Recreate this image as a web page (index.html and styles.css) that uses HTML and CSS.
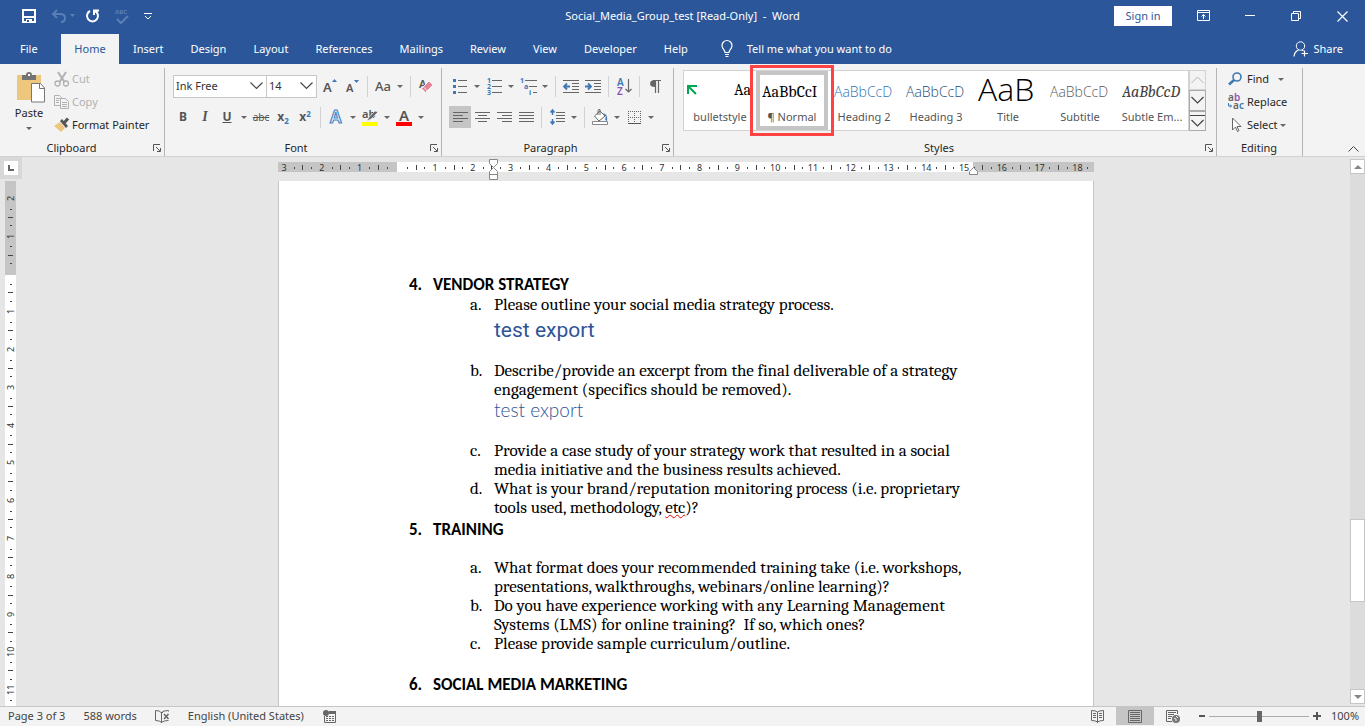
FILE: index.html
```
<!DOCTYPE html>
<html lang="en">
<head>
<meta charset="UTF-8">
<meta name="viewport" content="width=device-width, initial-scale=1.0">
<title>Social_Media_Group_test [Read-Only] - Word</title>
<link rel="stylesheet" href="styles.css">
</head>
<body>

<header class="titlebar">
	<div class="quick">
		<button aria-label="Save"><svg width="14" height="14" viewBox="0 0 14 14"><path d="M1 1h12v12H1z" fill="none" stroke="#fff" stroke-width="2"/><path d="M1 7h12v2H1zM4 10h6v4H4z" fill="#fff"/><path d="M5 11h2v2H5z" fill="#2b579a"/></svg></button>
		<button class="off" aria-label="Undo"><svg width="24" height="14" viewBox="0 0 24 14"><path d="M6 1L2 5l4 4M2 5h7q5 0 5 4t-4 4" fill="none" stroke="#5a7eb6" stroke-width="2"/><path d="M19 5h5l-2.500 3z" fill="#5a7eb6"/></svg></button>
		<button class="repeat" aria-label="Repeat"><svg width="14" height="14" viewBox="0 0 14 14"><path d="M9 2a5.500 5.500 0 1 1-5 0M8 6V1.500h5" fill="none" stroke="#fff" stroke-width="2"/></svg></button>
		<button class="off" aria-label="Spelling"><svg width="14" height="16" viewBox="0 0 14 16"><text x="0" y="6" font-size="6" font-weight="700" fill="#5a7eb6">ABC</text><path d="M2 11l4 4 7-7" fill="none" stroke="#5a7eb6" stroke-width="2"/></svg></button>
		<button aria-label="Customize"><svg width="8" height="8" viewBox="0 0 8 8"><path d="M0 1.500h8M1 4l3 3 3-3" fill="none" stroke="#fff"/></svg></button>
	</div>
	<div class="doc-name">Social_Media_Group_test [Read-Only]&nbsp; -&nbsp; Word</div>
	<div class="window-tools">
		<button class="signin">Sign in</button>
		<button aria-label="Ribbon display options"><svg width="14" height="12" viewBox="0 0 14 12"><path d="M.5.5h12v10H.5zM.5 2.500h12M6.500 9V4.500M4.500 6.500l2-2 2 2" fill="none" stroke="#fff"/></svg></button>
		<button aria-label="Minimize"><svg width="10" height="10" viewBox="0 0 10 10"><path d="M0 4.500h10" stroke="#fff"/></svg></button>
		<button aria-label="Restore"><svg width="10" height="10" viewBox="0 0 10 10"><path d="M.5 2.500h7v7h-7zM2.500 2.500v-2h7v7h-2" fill="none" stroke="#fff"/></svg></button>
		<button aria-label="Close"><svg width="11" height="11" viewBox="0 0 11 11"><path d="M.5.5l10 10M10.500.5l-10 10" stroke="#fff" stroke-width="1.200"/></svg></button>
	</div>
</header>

<nav class="tabs">
	<a href="#" class="file">File</a>
	<a href="#" class="active">Home</a>
	<a href="#">Insert</a>
	<a href="#">Design</a>
	<a href="#">Layout</a>
	<a href="#">References</a>
	<a href="#">Mailings</a>
	<a href="#">Review</a>
	<a href="#">View</a>
	<a href="#">Developer</a>
	<a href="#">Help</a>
	<a href="#" class="tell"><svg width="12" height="18" viewBox="0 0 12 18"><path d="M4 12.500c0-3-3-3.500-3-7a5 5 0 0 1 10 0c0 3.500-3 4-3 7zM4 14.500h4M4.500 16.500h3" fill="none" stroke="#fff" stroke-width="1.200"/></svg>Tell me what you want to do</a>
	<a href="#" class="share"><svg width="16" height="16" viewBox="0 0 16 16"><circle cx="7.500" cy="5" r="4.200" fill="none" stroke="#fff"/><path d="M1 15.500q.5-5 4.500-6.500M9 9l1.500 1M11.500 9.500v6M8.500 12.500h6.500" fill="none" stroke="#fff" stroke-width="1.200"/></svg>Share</a>
</nav>

<section class="ribbon">
	<div class="group clipboard">
		<div class="group-body">
			<button class="paste">
				<svg width="28" height="31" viewBox="0 0 28 31"><path d="M0 3h24v25H0z" fill="#eec77f"/><path d="M5 3h4q0-3 3-3t3 3h4v5H5z" fill="#737373"/><path d="M11 2h2v2h-2z" fill="#fff"/><path d="M14.500 11.500h9l4 4.500v14h-13z" fill="#fff" stroke="#777"/><path d="M22.500 11.500v5h5" fill="none" stroke="#777"/></svg>
				<span>Paste</span>
				<i class="caret"></i>
			</button>
			<div class="stack">
				<button class="off"><svg width="16" height="16" viewBox="0 0 16 16"><path d="M4 1l6.500 10M12 1L5.500 11" stroke="#b1b1b1" stroke-width="2"/><circle cx="3.500" cy="12.500" r="2.500" fill="none" stroke="#b1b1b1" stroke-width="1.300"/><circle cx="12" cy="12.500" r="2.500" fill="none" stroke="#b1b1b1" stroke-width="1.300"/></svg>Cut</button>
				<button class="off"><svg width="16" height="16" viewBox="0 0 16 16"><path d="M.5 1.500h5l2 2v8h-7zM2 4.500h4M2 6.500h3M2 8.500h3" fill="none" stroke="#b1b1b1"/><path d="M6.500 4.500h5l3 3v7h-8z" fill="#f3f3f3" stroke="#b1b1b1"/><path d="M8 8.500h5M8 10.500h5M8 12.500h5" stroke="#b1b1b1"/></svg>Copy</button>
				<button><svg width="16" height="16" viewBox="0 0 16 16"><path d="M0 9l6-4 5 6-4 4z" fill="#eec77f"/><path d="M6 4l2-2 6 7-2 2z" fill="#555"/><path d="M10 6l4-4.500" stroke="#555" stroke-width="3"/></svg>Format Painter</button>
			</div>
		</div>
		<div class="group-name"><span>Clipboard</span><button class="launch" aria-label="Clipboard settings"><svg width="8" height="8" viewBox="0 0 8 8"><path d="M.5 7V.5H7M3 3l4 4M7.500 4v3.500H4" fill="none" stroke="#555"/></svg></button></div>
	</div>

	<div class="group font">
		<div class="group-body rows">
			<div class="row">
				<label class="combo name"><select aria-label="Font"><option>Ink Free</option></select><svg width="13" height="8" viewBox="0 0 13 8"><path d="M.5.5l6 6 6-6" fill="none" stroke="#444" stroke-width="1.200"/></svg></label>
				<label class="combo size"><select aria-label="Font size"><option>14</option></select><svg width="13" height="8" viewBox="0 0 13 8"><path d="M.5.5l6 6 6-6" fill="none" stroke="#444" stroke-width="1.200"/></svg></label>
				<button class="ib grow" aria-label="Grow font"><svg width="16" height="16" viewBox="0 0 16 16"><text x="1" y="14" font-size="13" font-weight="600" fill="#555">A</text><path d="M10 4h5l-2.500-3z" fill="#3e78b5"/></svg></button>
				<button class="ib" aria-label="Shrink font"><svg width="16" height="16" viewBox="0 0 16 16"><text x="2" y="14" font-size="11" font-weight="600" fill="#555">A</text><path d="M10 2h5l-2.500 3z" fill="#3e78b5"/></svg></button>
				<i class="sep"></i>
				<button class="ib aa">Aa</button><button class="car" aria-label="Case options"><i class="caret"></i></button>
				<i class="sep"></i>
				<button class="ib" aria-label="Clear formatting"><svg width="16" height="16" viewBox="0 0 16 16"><text x="1" y="10" font-size="11" font-weight="600" fill="#555">A</text><path d="M3.500 10.500L11 3l4 4-7.500 7.500z" fill="#e8849a" stroke="#f3f3f3"/><path d="M5 8.500l4.500 4.500" stroke="#f3f3f3"/></svg></button>
			</div>
			<div class="row">
				<button class="ib b">B</button>
				<button class="ib it">I</button>
				<button class="ib u">U</button><button class="car" aria-label="Underline options"><i class="caret"></i></button>
				<button class="ib strike">abc</button>
				<button class="ib b">x<sub>2</sub></button>
				<button class="ib b">x<sup>2</sup></button>
				<i class="sep"></i>
				<button class="ib" aria-label="Text effects"><svg width="16" height="16" viewBox="0 0 16 16"><text x="2" y="14" font-size="17" font-weight="600" fill="#fff" stroke="#4a86c5" stroke-width="1.200">A</text></svg></button><button class="car" aria-label="Effect options"><i class="caret"></i></button>
				<button class="ib" aria-label="Highlight"><svg width="18" height="17" viewBox="0 0 18 17"><text x="1" y="9" font-size="11" font-weight="600" fill="#555">ab</text><path d="M6 12l2-4 6-6 3 1-7 7z" fill="#666" stroke="#f3f3f3" stroke-width=".6"/><path d="M1 13h16v4H1z" fill="#ff0"/></svg></button><button class="car" aria-label="Highlight colors"><i class="caret"></i></button>
				<button class="ib" aria-label="Font color"><svg width="16" height="17" viewBox="0 0 16 17"><text x="3" y="12" font-size="15" font-weight="600" fill="#555">A</text><path d="M0 13h16v4H0z" fill="#f00"/></svg></button><button class="car" aria-label="Font colors"><i class="caret"></i></button>
			</div>
		</div>
		<div class="group-name"><span>Font</span><button class="launch" aria-label="Font settings"><svg width="8" height="8" viewBox="0 0 8 8"><path d="M.5 7V.5H7M3 3l4 4M7.500 4v3.500H4" fill="none" stroke="#555"/></svg></button></div>
	</div>

	<div class="group paragraph">
		<div class="group-body rows">
			<div class="row">
				<button class="ib" aria-label="Bullets"><svg width="14" height="16" viewBox="0 0 14 16"><path d="M5 2.500h9M5 8.500h9M5 14.500h9" stroke="#666"/><path d="M0 1h3v3H0zM0 7h3v3H0zM0 13h3v3H0z" fill="#3e78b5"/></svg></button><button class="car" aria-label="Bullet styles"><i class="caret"></i></button>
				<button class="ib" aria-label="Numbering"><svg width="15" height="18" viewBox="0 0 15 18"><path d="M5 3.500h10M5 9.500h10M5 15.500h10" stroke="#666"/><g font-size="7" font-weight="700" fill="#3e78b5"><text x="0" y="6">1</text><text x="0" y="12">2</text><text x="0" y="18">3</text></g></svg></button><button class="car" aria-label="Number formats"><i class="caret"></i></button>
				<button class="ib" aria-label="Multilevel list"><svg width="17" height="18" viewBox="0 0 17 18"><path d="M5 3.500h12M9 9.500h8M13 15.500h4" stroke="#666"/><g font-size="7" font-weight="700" fill="#3e78b5"><text x="0" y="6">1</text><text x="4" y="12">a</text><text x="9" y="18">i</text></g></svg></button><button class="car" aria-label="List levels"><i class="caret"></i></button>
				<i class="sep"></i>
				<button class="ib" aria-label="Decrease indent"><svg width="16" height="13" viewBox="0 0 16 13"><path d="M0 .5h16M9 3.500h7M9 6.500h7M9 9.500h7M0 12.500h16" stroke="#666"/><path d="M7 6.500H1M4 3.500l-3 3 3 3" fill="none" stroke="#3e78b5" stroke-width="1.800"/></svg></button>
				<button class="ib" aria-label="Increase indent"><svg width="16" height="13" viewBox="0 0 16 13"><path d="M0 .5h16M9 3.500h7M9 6.500h7M9 9.500h7M0 12.500h16" stroke="#666"/><path d="M0 6.500h6M3 3.500l3 3-3 3" fill="none" stroke="#3e78b5" stroke-width="1.800"/></svg></button>
				<i class="sep"></i>
				<button class="ib" aria-label="Sort"><svg width="14" height="17" viewBox="0 0 14 17"><g font-size="10" font-weight="600"><text x="0" y="8" fill="#3e78b5">A</text><text x="0" y="17" fill="#8a55b0">Z</text></g><path d="M11.500 1v13M8.500 11l3 3 3-3" fill="none" stroke="#666" stroke-width="1.200"/></svg></button>
				<i class="sep"></i>
				<button class="ib" aria-label="Show marks"><svg width="11" height="13" viewBox="0 0 11 13"><path d="M5 7Q0 7 0 3.500T5 0z" fill="#666"/><path d="M3 .5h8M5.500 0v13M8.500 0v13" stroke="#666" stroke-width="1.200"/></svg></button>
			</div>
			<div class="row">
				<button class="ib on" aria-label="Align left"><svg width="15" height="11" viewBox="0 0 15 11"><path d="M0 .5h15M0 3.500h10M0 6.500h15M0 9.500h10" stroke="#666"/></svg></button>
				<button class="ib" aria-label="Center"><svg width="15" height="11" viewBox="0 0 15 11"><path d="M0 .5h15M3 3.500h9M0 6.500h15M3 9.500h9" stroke="#666"/></svg></button>
				<button class="ib" aria-label="Align right"><svg width="15" height="11" viewBox="0 0 15 11"><path d="M0 .5h15M5 3.500h10M0 6.500h15M5 9.500h10" stroke="#666"/></svg></button>
				<button class="ib" aria-label="Justify"><svg width="15" height="11" viewBox="0 0 15 11"><path d="M0 .5h15M0 3.500h15M0 6.500h15M0 9.500h15" stroke="#666"/></svg></button>
				<i class="sep"></i>
				<button class="ib" aria-label="Line spacing"><svg width="15" height="16" viewBox="0 0 15 16"><path d="M6 3.500h9M6 6.500h9M6 9.500h9M6 12.500h9" stroke="#666"/><path d="M2.500 1v5M.5 3.500l2-2.500 2 2.500M2.500 15v-5M.5 12.500l2 2.500 2-2.500" fill="none" stroke="#3e78b5" stroke-width="1.500"/></svg></button><button class="car" aria-label="Spacing options"><i class="caret"></i></button>
				<i class="sep"></i>
				<button class="ib" aria-label="Shading"><svg width="17" height="16" viewBox="0 0 17 16"><path d="M2.500 7L8 2l5 5-6 5zM6 6V2q0-2 2-1.500V6" fill="#fff" stroke="#666"/><path d="M11 4q5 1 4 8-3-1-1-4z" fill="#3e78b5"/><path d="M.5 12.500h15v3H.5z" fill="#fff" stroke="#888"/></svg></button><button class="car" aria-label="Shading colors"><i class="caret"></i></button>
				<button class="ib" aria-label="Borders"><svg width="13" height="13" viewBox="0 0 13 13"><path d="M0 .5h13M.5 0v12M6.500 0v12M12.500 0v12M0 6.500h13" stroke="#666" stroke-dasharray="1 1"/><path d="M0 12.500h13" stroke="#555"/></svg></button><button class="car" aria-label="Border options"><i class="caret"></i></button>
			</div>
		</div>
		<div class="group-name"><span>Paragraph</span><button class="launch" aria-label="Paragraph settings"><svg width="8" height="8" viewBox="0 0 8 8"><path d="M.5 7V.5H7M3 3l4 4M7.500 4v3.500H4" fill="none" stroke="#555"/></svg></button></div>
	</div>

	<div class="group styles">
		<div class="group-body">
			<div class="gallery">
				<button class="style bullet"><span class="sample"><svg width="10" height="10" viewBox="0 0 10 10"><path d="M1 9V1h9M1.500 1.500L9 9" fill="none" stroke="#00a651" stroke-width="2"/></svg><b>Aa</b></span><span>bulletstyle</span></button>
				<button class="style normal"><span class="sample">AaBbCcI</span><span>¶ Normal</span></button>
				<button class="style h2"><span class="sample">AaBbCcD</span><span>Heading 2</span></button>
				<button class="style h3"><span class="sample">AaBbCcD</span><span>Heading 3</span></button>
				<button class="style title"><span class="sample">AaB</span><span>Title</span></button>
				<button class="style subtitle"><span class="sample">AaBbCcD</span><span>Subtitle</span></button>
				<button class="style subtle"><span class="sample">AaBbCcD</span><span>Subtle Em...</span></button>
			</div>
			<div class="gallery-nav">
				<button class="off" aria-label="Previous styles"><svg width="13" height="8" viewBox="0 0 13 8"><path d="M.5 7l6-6 6 6" fill="none" stroke="#b5b5b5"/></svg></button>
				<button aria-label="Next styles"><svg width="13" height="8" viewBox="0 0 13 8"><path d="M.5 1l6 6 6-6" fill="none" stroke="#444" stroke-width="1.200"/></svg></button>
				<button aria-label="More styles"><svg width="15" height="14" viewBox="0 0 15 14"><path d="M0 1.500h15M1.500 6l6 6 6-6" fill="none" stroke="#444" stroke-width="1.200"/></svg></button>
			</div>
		</div>
		<div class="group-name"><span>Styles</span><button class="launch" aria-label="Styles pane"><svg width="8" height="8" viewBox="0 0 8 8"><path d="M.5 7V.5H7M3 3l4 4M7.500 4v3.500H4" fill="none" stroke="#555"/></svg></button></div>
	</div>

	<div class="group editing">
		<div class="group-body stack">
			<button><svg width="16" height="14" viewBox="0 0 16 14"><circle cx="9" cy="5" r="4" fill="none" stroke="#3e78b5" stroke-width="1.600"/><path d="M6 8l-5 4.500" stroke="#3e78b5" stroke-width="2.500"/></svg>Find<i class="caret far"></i></button>
			<button><svg width="16" height="16" viewBox="0 0 16 16"><g font-size="10" font-weight="600"><text x="0" y="7" fill="#666">a</text><text x="6" y="7" fill="#8a55b0">b</text><text x="5" y="15" fill="#666">a</text><text x="11" y="15" fill="#3e78b5">c</text></g><path d="M.5 9v3h3M2 10.500L3.500 12 2 13.500" fill="none" stroke="#3e78b5"/></svg>Replace</button>
			<button><svg width="16" height="16" viewBox="0 0 16 16"><path d="M4.500 1v12l3-3 2 4.500 1.500-.8-2-4.200h4z" fill="#fff" stroke="#666"/></svg>Select<i class="caret"></i></button>
		</div>
		<div class="group-name"><span>Editing</span></div>
	</div>
	<button class="collapse" aria-label="Collapse the ribbon"><svg width="11" height="6" viewBox="0 0 11 6"><path d="M.5 5.500l5-5 5 5" fill="none" stroke="#444"/></svg></button>
</section>

<main class="workspace">
	<div class="left-edge">
		<button class="tabstop" aria-label="Tab stop"><svg width="6" height="6" viewBox="0 0 6 6"><path d="M1 0v5h5" fill="none" stroke="#666" stroke-width="2"/></svg></button>
		<div class="vruler" id="vruler"></div>
	</div>
	<div class="canvas">
		<div class="hruler" id="hruler">
			<svg class="mark indent" width="9" height="22" viewBox="0 0 9 22"><path d="M.5.5h8v4l-4 4 4 4v8h-8v-8l4-4-4-4z" fill="#fff" stroke="#888"/><path d="M.5 15.500h8" stroke="#888"/></svg>
			<svg class="mark right" width="9" height="8" viewBox="0 0 9 8"><path d="M.5 7.500v-3l4-4 4 4v3z" fill="#fff" stroke="#888"/></svg>
		</div>
		<article class="page">
			<h2><span>4.</span>VENDOR STRATEGY</h2>
			<ol>
				<li><span>a.</span><p>Please outline your social media strategy process.</p>
					<p class="answer big">test export</p></li>
				<li><span>b.</span><p>Describe/provide an excerpt from the final deliverable of a strategy<br>engagement (specifics should be removed).</p>
					<p class="answer ink">test export</p></li>
				<li><span>c.</span><p>Provide a case study of your strategy work that resulted in a social<br>media initiative and the business results achieved.</p></li>
				<li><span>d.</span><p>What is your brand/reputation monitoring process (i.e. proprietary<br>tools used, methodology, <u>etc</u>)?</p></li>
			</ol>
			<h2><span>5.</span>TRAINING</h2>
			<ol class="spaced">
				<li><span>a.</span><p>What format does your recommended training take (i.e. workshops,<br>presentations, walkthroughs, webinars/online learning)?</p></li>
				<li><span>b.</span><p>Do you have experience working with any Learning Management<br>Systems (LMS) for online training?&nbsp; If so, which ones?</p></li>
				<li><span>c.</span><p>Please provide sample curriculum/outline.</p></li>
			</ol>
			<h2><span>6.</span>SOCIAL MEDIA MARKETING</h2>
		</article>
	</div>
	<div class="scrollbar">
		<button aria-label="Scroll up"><i class="caret up"></i></button>
		<div class="track"><div class="thumb"></div></div>
		<button aria-label="Scroll down"><i class="caret down"></i></button>
	</div>
</main>

<footer class="status">
	<span class="pages">Page 3 of 3</span>
	<span class="words">588 words</span>
	<button class="proof" aria-label="Proofing errors"><svg width="15" height="13" viewBox="0 0 15 13"><path d="M8 2.500H6q-1-2-5.500-2v10q4.500 0 6 2V2.500M6.500 2.500Q8 .5 13.500.5v1M6.500 12.500q2-2 7-2" fill="none" stroke="#666"/><path d="M9 4l4.500 5M13.500 4L9 9" stroke="#666" stroke-width="1.500"/></svg></button>
	<span class="lang">English (United States)</span>
	<button class="macro" aria-label="Record macro"><svg width="13" height="13" viewBox="0 0 13 13"><path d="M1.500 6v6.500h11V4" fill="none" stroke="#666"/><path d="M6 1h7v3H6z" fill="#666"/><circle cx="3" cy="3" r="3" fill="#666"/><path d="M3 6.500h8M3 8.500h8M3 10.500h8" stroke="#666" stroke-dasharray="2 1"/></svg></button>
	<div class="views">
		<button aria-label="Read mode"><svg width="13" height="13" viewBox="0 0 13 13"><path d="M.5.5q4 0 6 1.500 2-1.500 6-1.500v10q-4 0-6 1.500-2-1.500-6-1.500zM6.500 2v11M2 3.500h3M2 5.500h3M2 7.500h3M8 3.500h3M8 5.500h3M8 7.500h3" fill="none" stroke="#666"/></svg></button>
		<button class="on" aria-label="Print layout"><svg width="14" height="13" viewBox="0 0 14 13"><path d="M.5.5h13v12H.5zM2 2.500h10M2 4.500h10M2 6.500h10M2 8.500h10M2 10.500h10" fill="none" stroke="#666"/></svg></button>
		<button aria-label="Web layout"><svg width="14" height="13" viewBox="0 0 14 13"><path d="M11.500 4V.5H.5v11H6M2 2.500h8M2 4.500h6M2 6.500h4M2 8.500h3" fill="none" stroke="#666"/><circle cx="10" cy="9" r="4" fill="#777"/><path d="M8 8l2 1v2M10 6l2 2" stroke="#f3f3f3" fill="none"/></svg></button>
	</div>
	<div class="zoom">
		<button aria-label="Zoom out"><svg width="6" height="8" viewBox="0 0 6 8"><path d="M0 4h6" stroke="#555" stroke-width="2"/></svg></button>
		<input type="range" min="0" max="100" value="50" aria-label="Zoom">
		<button aria-label="Zoom in"><svg width="8" height="8" viewBox="0 0 8 8"><path d="M0 4h8M4 0v8" stroke="#555" stroke-width="2"/></svg></button>
		<span>100%</span>
	</div>
</footer>

<script src="ruler.js"></script>
</body>
</html>
```
FILE: styles.css
```
*{
	box-sizing: border-box;
	margin: 0;
	padding: 0;
}
html,body{
	height: 100%;
}
body{
	display: flex;
	flex-direction: column;
	overflow: hidden;
	font: 11px/16px "Segoe UI", "Noto Sans", "Open Sans", sans-serif;
	color: #262626;
	background: #e6e6e6;
}
button{
	border: 0;
	background: none;
	font: inherit;
	color: inherit;
	display: flex;
	align-items: center;
	justify-content: center;
	white-space: nowrap;
}
a{
	color: inherit;
	text-decoration: none;
}
svg{
	display: block;
	flex: none;
	overflow: visible;
}
i{
	font-style: normal;
}
.caret{
	border: 3px solid transparent;
	border-top-color: #666;
	border-bottom: 0;
}
.caret.up, .caret.down{
	border-width: 4px;
	border-top-color: #888;
	border-bottom: 0;
}
.caret.up{
	border-top: 0;
	border-bottom: 4px solid #888;
}
.off{
	color: #b1b1b1;
}

/* title bar */
.titlebar{
	display: grid;
	grid-template-columns: 1fr auto 1fr;
	align-items: center;
	height: 32px;
	flex: none;
	background: #2b579a;
	color: #fff;
}
.quick{
	display: flex;
	align-items: center;
	gap: 15px;
	padding-left: 22px;
}
.quick .repeat{
	margin-left: -4px;
}
.window-tools{
	display: flex;
	justify-content: flex-end;
}
.window-tools button{
	width: 46px;
	height: 20px;
}
.window-tools .signin{
	width: 58px;
	margin-right: 9px;
	background: #fff;
	color: #2b579a;
}

/* tabs */
.tabs{
	display: flex;
	height: 32px;
	padding-top: 2px;
	flex: none;
	background: #2b579a;
	color: #fff;
}
.tabs a{
	display: flex;
	align-items: center;
	padding: 0 14px 0 13px;
}
.tabs .file{
	width: 61px;
	padding-left: 20px;
}
.tabs .active{
	width: 58px;
	justify-content: center;
	padding: 0;
	background: #f3f3f3;
	color: #2b579a;
}
.tabs .active + a{
	padding-left: 14px;
}
.tabs .tell{
	gap: 14px;
	padding-left: 19px;
}
.tabs .share{
	gap: 4px;
	margin-left: auto;
	padding-right: 22px;
}

/* ribbon */
.ribbon{
	display: flex;
	height: 93px;
	flex: none;
	padding: 4px 0 0;
	border-bottom: 1px solid #d2d2d2;
	background: #f3f3f3;
}
.group{
	display: flex;
	flex-direction: column;
	height: 88px;
	border-right: 1px solid #b5b5b5;
}
.group-body{
	display: flex;
	height: 72px;
	flex: none;
}
.group-name{
	display: flex;
	align-items: center;
	height: 16px;
	padding-right: 3px;
}
.group-name span{
	flex: 1;
	text-align: center;
}
.launch{
	width: 8px;
	margin-left: 10px;
}
.clipboard{
	width: 165px;
}
.font{
	width: 277px;
	padding-left: 7px;
}
.paragraph{
	width: 232px;
	padding-left: 7px;
}
.styles{
	flex: 1;
	padding-left: 9px;
}
.editing{
	width: 86px;
	padding-left: 11px;
}
.editing .group-name{
	padding-right: 12px;
}
.paste{
	flex-direction: column;
	justify-content: flex-start;
	width: 54px;
	padding: 4px 0 0 4px;
}
.paste svg{
	margin-left: 4px;
}
.paste span{
	line-height: 20px;
}
.paste .caret{
	margin-top: 4px;
}
.stack{
	display: flex;
	flex-direction: column;
	align-items: flex-start;
	padding-top: 0;
}
.stack button{
	gap: 3px;
	height: 23px;
	padding-bottom: 1px;
}
.clipboard .stack button{
	gap: 2px;
}
.stack .caret{
	margin-left: -1px;
}
.stack .far{
	margin-left: 6px;
}
.rows{
	flex-direction: column;
	padding-top: 7px;
	gap: 9px;
}
.row{
	display: flex;
	align-items: center;
	height: 22px;
}
.combo{
	display: grid;
	align-items: center;
	height: 23px;
	margin-left: -1px;
	border: 1px solid #c6c6c6;
	background: #fff;
}
.combo.name{
	width: 94px;
	margin-left: 1px;
}
.combo.size{
	width: 51px;
}
.combo select, .combo svg{
	grid-area: 1 / 1;
}
.combo select{
	appearance: none;
	border: 0;
	background: none;
	padding-left: 2px;
	font: inherit;
	color: #333;
}
.combo svg{
	justify-self: end;
	margin-right: 3px;
	pointer-events: none;
}
.ib{
	width: 22px;
	height: 22px;
	flex: none;
	color: #555;
}
.ib.grow{
	margin-left: 2px;
}
.ib.on{
	background: #c5c5c5;
}
.ib.aa{
	font-size: 13px;
	font-weight: 500;
}
.ib.b, .ib.u{
	font-size: 12px;
	font-weight: 700;
}
.ib.it{
	font: italic 700 14px "Liberation Serif", serif;
}
.ib.u{
	text-decoration: underline;
}
.ib.strike{
	font-size: 10px;
	text-decoration: line-through;
}
.ib sub, .ib sup{
	font-size: 8px;
	line-height: 8px;
	color: #3e78b5;
}
.ib sub{
	align-self: flex-end;
	margin-bottom: 3px;
}
.ib sup{
	align-self: flex-start;
	margin-top: 4px;
}
.car{
	width: 12px;
	height: 22px;
}
.sep{
	width: 1px;
	height: 21px;
	margin: 0 4px;
	background: #d2d2d2;
}

/* styles gallery */
.gallery{
	display: flex;
	flex: 1;
	height: 61px;
	margin-top: 2px;
	border: 1px solid #d2d2d2;
	background: #fff;
}
.style{
	position: relative;
	flex: 1 1 0;
	min-width: 0;
	flex-direction: column;
	justify-content: flex-start;
	color: #555;
	padding: 0 6px;
}
.style span{
	height: 16px;
}
.style .sample{
	display: block;
	width: 100%;
	height: 38px;
	overflow: hidden;
	text-align: left;
	font: 300 14px/42px "Open Sans", sans-serif;
}
.bullet .sample{
	display: flex;
	align-items: center;
	justify-content: space-between;
	width: 66px;
	color: #000;
}
.bullet b{
	width: 19px;
	overflow: hidden;
	font: 16px/40px Cambria, "Liberation Serif", serif;
}
.normal{
	outline: 4px solid #c5c5c5;
	outline-offset: -4px;
}
.normal .sample{
	font: 16px/42px Cambria, "Liberation Serif", serif;
	color: #000;
}
.normal::after{
	content: "";
	position: absolute;
	inset: -6px;
	border: 3px solid #fd4343;
}
.h2 .sample{
	color: #2e74b5;
}
.h3 .sample{
	color: #1f4d78;
}
.title .sample{
	font-size: 32px;
	line-height: 36px;
	color: #000;
}
.subtitle .sample{
	color: #5a5a5a;
}
.subtle .sample{
	font: italic 16px/42px Cambria, "Liberation Serif", serif;
	color: #404040;
}
.gallery-nav{
	display: flex;
	flex-direction: column;
	width: 17px;
	height: 61px;
	margin: 2px 10px 0 0;
}
.gallery-nav button{
	flex: 1;
	border: 1px solid #ababab;
}
.gallery-nav .off{
	border-color: #d2d2d2;
}
.collapse{
	width: 62px;
	align-self: flex-end;
	height: 14px;
	padding-left: 38px;
}

/* document area */
.workspace{
	display: flex;
	flex: 1;
	min-height: 0;
}
.left-edge{
	display: flex;
	flex-direction: column;
	width: 22px;
}
.tabstop{
	width: 22px;
	height: 22px;
	flex: none;
	margin-bottom: 2px;
	border: 4px solid #d8d8d8;
	background: #fff;
}
.vruler, .hruler{
	font: 9px/11px "Noto Sans", sans-serif;
	color: #333;
}
.vruler{
	flex: 1;
	width: 11px;
	margin-left: 5px;
	padding-top: 11px;
	overflow: hidden;
	background: linear-gradient(#c5c5c5 94px, #fff 94px);
}
.vruler .cm{
	display: flex;
	flex-direction: column;
	align-items: center;
	height: 1cm;
}
.vruler .cm b{
	height: 13px;
	writing-mode: vertical-rl;
	transform: rotate(180deg);
}
.cm{
	flex: none;
}
.cm b{
	font-weight: 400;
	text-align: center;
}
.cm i{
	flex: 1;
	display: grid;
	place-items: center;
}
.cm i::after{
	content: "";
	width: 1px;
	height: 2px;
	background: #444;
}
.cm .half::after{
	height: 5px;
}
.vruler .cm i::after{
	width: 2px;
	height: 1px;
}
.vruler .cm .half::after{
	width: 5px;
}
.canvas{
	display: flex;
	flex-direction: column;
	align-items: center;
	flex: 1;
	min-width: 0;
}
.hruler{
	position: relative;
	width: 816px;
	height: 10px;
	margin: 5px 0 9px;
	flex: none;
	background: linear-gradient(90deg, #c5c5c5 119px, #fff 119px, #fff 695px, #c5c5c5 695px);
}
.hruler .scale{
	display: flex;
	height: 11px;
	overflow: hidden;
}
.hruler .cm{
	display: flex;
	width: 1cm;
}
.hruler .cm b{
	width: 12px;
	line-height: 12px;
}
.mark{
	position: absolute;
}
.mark.indent{
	left: 211px;
	top: -3px;
}
.mark.right{
	left: 691px;
	top: 5px;
}
.page{
	width: 816px;
	flex: 1;
	min-height: 0;
	overflow: hidden;
	padding: 93px 96px 0 130px;
	border: 1px solid #c6c6c6;
	border-width: 0 1px;
	background: #fff;
	color: #000;
	font: 17px/19px Cambria, "Liberation Serif", serif;
}
.page h2{
	display: flex;
	font: 700 17px/21px Calibri, "Open Sans", sans-serif;
}
.page h2 span{
	width: 24px;
}
.page ol{
	list-style: none;
	padding: 0 0 2px 61px;
}
.page li{
	display: grid;
	grid-template-columns: 24px 1fr;
}
.page .spaced{
	padding-top: 18px;
	padding-bottom: 21px;
}
.page p{
	grid-column: 2;
	white-space: nowrap;
}
.page u{
	text-decoration: underline wavy #e00 1px;
	text-underline-offset: 1px;
}
.page .answer{
	color: #2f5496;
}
.page .big{
	font: 21px/32px Bahnschrift, Roboto, sans-serif;
	padding-bottom: 15px;
}
.page .ink{
	font: 300 19px/22px "Ink Free", Lato, sans-serif;
	padding-bottom: 20px;
}

/* scroll bar */
.scrollbar{
	display: flex;
	flex-direction: column;
	width: 15px;
	padding: 2px 0;
}
.scrollbar button{
	height: 15px;
	border: 1px solid #c6c6c6;
	background: #fff;
}
.track{
	flex: 1;
	padding-top: 345px;
	background: #dcdcdc;
}
.thumb{
	height: 83px;
	border: 1px solid #c6c6c6;
	background: #fff;
}

/* status bar */
.status{
	display: flex;
	align-items: center;
	height: 20px;
	flex: none;
	border-top: 1px solid #c6c6c6;
	background: #f3f3f3;
	color: #444;
	padding: 0 6px 1px 8px;
}
.words{
	margin: 0 18px;
}
.proof{
	margin-right: 18px;
}
.macro{
	margin-left: 19px;
}
.views{
	display: flex;
	align-self: stretch;
	margin-left: auto;
}
.views button{
	width: 38px;
}
.views .on{
	background: #c5c5c5;
}
.zoom{
	display: flex;
	align-items: center;
	gap: 4px;
	padding-left: 7px;
}
.zoom span{
	width: 28px;
	margin-left: 6px;
}
.zoom input{
	appearance: none;
	width: 100px;
	height: 1px;
	background: #ababab;
}
.zoom input::-webkit-slider-thumb{
	appearance: none;
	width: 5px;
	height: 11px;
	background: #666;
}
```
FILE: ruler.js
```
function drawScale(box, from, to){
	var str = '';
	for (var i = from; i <= to; i++) {
		// the zero mark has no number
		str += '<span class="cm"><b>' + (i == 0 ? '' : Math.abs(i)) + '</b><i></i><i class="half"></i><i></i></span>';
	}
	box.innerHTML += str;
}

var hRuler = document.getElementById('hruler');
var scale = document.createElement('div');
scale.className = 'scale';
drawScale(scale, -3, 18);
hRuler.insertBefore(scale, hRuler.firstChild);

drawScale(document.getElementById('vruler'), -2, 11);
```
